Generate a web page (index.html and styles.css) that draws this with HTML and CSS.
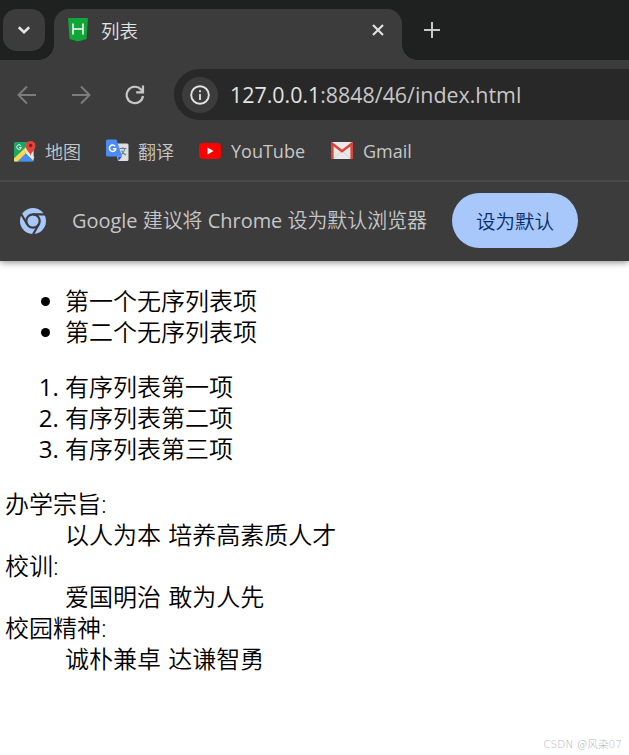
FILE: index.html
```
<!DOCTYPE html>
<html lang="zh-CN">
<head>
  <meta charset="UTF-8" />
  <title>列表</title>
  <link rel="stylesheet" href="styles.css">
</head>
<body>

  <!-- Browser window top -->
  <header class="browser">
    <div class="tab-strip">
      <button class="tab-search">
        <svg width="14" height="10" viewBox="0 0 14 10"><path d="M1.8 2.2 7 7.2l5.2-5" fill="none" stroke="#e3e3e3" stroke-width="2.6"/></svg>
      </button>
      <div class="tab">
        <svg class="favicon" width="20" height="24" viewBox="0 0 20 24"><path d="M0 0h20l-1.500 21L10 23.500 1.500 21z" fill="#12a53a"/><path d="M5 5.500v11M15 5.500v11M5 11h10" stroke="#fff" stroke-width="1.500" fill="none"/></svg>
        <span class="tab-title">列表</span>
        <svg width="12" height="12" viewBox="0 0 12 12"><path d="M1 1l10 10M11 1 1 11" stroke="#e3e3e3" stroke-width="2.100"/></svg>
      </div>
      <svg class="new-tab" width="16" height="16" viewBox="0 0 16 16"><path d="M8 0v16M0 8h16" stroke="#c7c7c7" stroke-width="2"/></svg>
    </div>

    <div class="toolbar">
      <svg width="20" height="20" viewBox="0 0 20 20"><path d="M19 10H2M10 1.500 1.500 10l8.500 8.500" fill="none" stroke="#7c7c7c" stroke-width="2"/></svg>
      <svg width="20" height="20" viewBox="0 0 20 20"><path d="M1 10h17M10 1.500l8.500 8.500-8.500 8.500" fill="none" stroke="#7c7c7c" stroke-width="2"/></svg>
      <svg width="20" height="20" viewBox="0 0 20 20"><path d="M18 11a8.200 8.200 0 1 1-2-6.500l2 2.300M18 .5v6.800h-6.800" fill="none" stroke="#c7c7c7" stroke-width="2.200"/></svg>
      <div class="address">
        <span class="site-info">
          <svg width="20" height="20" viewBox="0 0 20 20"><circle cx="10" cy="10" r="8.800" fill="none" stroke="#e3e3e3" stroke-width="1.900"/><path d="M10 9v6M10 5.200v2" stroke="#e3e3e3" stroke-width="1.800"/></svg>
        </span>
        <span class="url"><b>127.0.0.1</b>:8848/46/index.html</span>
      </div>
    </div>

    <nav class="bookmarks">
      <a class="bookmark maps">
        <svg width="22" height="22" viewBox="0 0 22 22">
          <rect x="0" y="2" width="19.500" height="19.500" rx="1.500" fill="#1fa463"/>
          <path d="M19.500 4v17L10 11.500z" fill="#e8e8e8"/>
          <path d="M10 12l9.500 9.500H1z" fill="#4c8bf5"/>
          <path d="M0 18.500 14 5l3 3L3.500 21.500H0z" fill="#ffd84d"/>
          <path d="M11 9l9 9" stroke="#e8e8e8" stroke-width="1.500"/>
          <path d="M16.500 16c-.5-4-4.800-5.500-4.800-10.200a4.900 4.900 0 0 1 9.800 0C21.500 10.500 17 12 16.500 16z" fill="#e2443b"/>
          <circle cx="16.600" cy="5.500" r="1.700" fill="#7e1d17"/>
          <path d="M6.800 5.600a2.300 2.300 0 1 0 .5 1.900H5" fill="none" stroke="#fff" stroke-width="1"/>
        </svg>
        地图
      </a>
      <a class="bookmark translate">
        <svg width="23" height="23" viewBox="0 0 23 23">
          <path d="M9 4.500h12a1.500 1.500 0 0 1 1.500 1.500v14.500A1.500 1.500 0 0 1 21 22h-9z" fill="#dedede"/>
          <path d="M12 17.500h4L12.500 22z" fill="#2751c5"/>
          <path d="M1.500.5h9L16 17.500H1.500A1.500 1.500 0 0 1 0 16V2A1.500 1.500 0 0 1 1.500.5z" fill="#4c8bf5"/>
          <path d="M9.200 7.300a3.200 3.200 0 1 0 .6 2.500H6.800" fill="none" stroke="#fff" stroke-width="1.500"/>
          <path d="M13.500 9.500h7M17 8v1.500M19 9.500c-.7 3-2 5-4 6.500M15.500 11.500c1 2 2.500 3.500 4.500 4.500" fill="none" stroke="#607d8b" stroke-width="1.100"/>
        </svg>
        翻译
      </a>
      <a class="bookmark youtube">
        <svg width="22" height="16" viewBox="0 0 22 16"><rect width="22" height="16" rx="4" fill="#f00"/><path d="M8.500 4.500v7l6-3.500z" fill="#fff"/></svg>
        YouTube
      </a>
      <a class="bookmark gmail">
        <svg width="22" height="17" viewBox="0 0 22 17"><rect width="22" height="17" rx="1.500" fill="#e9e9e9"/><path d="M3 16l8-7 8 7" fill="none" stroke="#d2d2d2"/><path d="M1.300 17V1.800L11 9.200l9.700-7.400V17" fill="none" stroke="#dc4439" stroke-width="2.600"/></svg>
        Gmail
      </a>
    </nav>

    <div class="infobar">
      <svg width="26" height="26" viewBox="0 0 26 26">
        <circle cx="13" cy="13" r="13" fill="#a8c7fa"/>
        <circle cx="13" cy="13" r="6.700" fill="none" stroke="#3c3c3c" stroke-width="2.200"/>
        <path d="M13 6.300h12M7.200 16.300 1.200 6M18.800 16.300 13 26.500" stroke="#3c3c3c" stroke-width="2.200"/>
      </svg>
      <span class="infobar-text"><span class="latin">Google</span> 建议将 <span class="latin">Chrome</span> 设为默认浏览器</span>
      <button class="default-btn">设为默认</button>
    </div>
  </header>

  <!-- Page content -->
  <main class="page">
    <ul>
      <li>第一个无序列表项</li>
      <li>第二个无序列表项</li>
    </ul>
    <ol>
      <li>有序列表第一项</li>
      <li>有序列表第二项</li>
      <li>有序列表第三项</li>
    </ol>
    <dl>
      <dt>办学宗旨:</dt>
      <dd>以人为本 培养高素质人才</dd>
      <dt>校训:</dt>
      <dd>爱国明治 敢为人先</dd>
      <dt>校园精神:</dt>
      <dd>诚朴兼卓 达谦智勇</dd>
    </dl>
  </main>

  <footer class="watermark">CSDN @风染07</footer>

</body>
</html>
```
FILE: styles.css
```
* {
  box-sizing: border-box;
}
body {
  margin: 0;
  height: 755px;
  display: flex;
  flex-direction: column;
  overflow: hidden;
  background: #fff;
  color: #000;
  font-family: "Open Sans", "Noto Sans CJK SC", sans-serif;
}
svg {
  display: block;
  flex: none;
}
.browser {
  height: 261px;
  flex: none;
  background: #3c3c3c;
  color: #c7c7c7;
  box-shadow: 0 1px 7px rgba(0, 0, 0, 0.5);
}

/* Tabs */
.tab-strip {
  display: flex;
  height: 60px;
  padding: 9px 0 0 3px;
  background: #1f2020;
}
.tab-search {
  display: flex;
  align-items: center;
  justify-content: center;
  width: 42px;
  height: 42px;
  padding: 0;
  border: 0;
  border-radius: 14px;
  background: #3c3c3c;
}
.tab {
  position: relative;
  display: flex;
  align-items: center;
  width: 348px;
  height: 51px;
  margin-left: 9px;
  padding: 0 18px 9px 14px;
  border-radius: 15px 15px 0 0;
  background: #3c3c3c;
}
/* Curved feet of the active tab */
.tab::before,
.tab::after {
  content: "";
  position: absolute;
  bottom: 0;
  width: 15px;
  height: 15px;
}
.tab::before {
  left: -15px;
  background: radial-gradient(circle at 0 0, transparent 14.5px, #3c3c3c 15px);
}
.tab::after {
  right: -15px;
  background: radial-gradient(circle at 100% 0, transparent 14.5px, #3c3c3c 15px);
}
.tab-title {
  flex: 1;
  margin-left: 13px;
  color: #e3e3e3;
  font-size: 18.500px;
  font-weight: 350;
}
.new-tab {
  margin: 13px 0 0 22px;
}

/* Address row */
.toolbar {
  display: flex;
  align-items: center;
  gap: 34px;
  height: 69px;
  padding-left: 17px;
}
.address {
  display: flex;
  align-items: center;
  flex: 1;
  height: 51px;
  margin-left: -5px;
  padding-left: 8px;
  border-radius: 26px 0 0 26px;
  background: #282828;
}
.site-info {
  display: flex;
  align-items: center;
  justify-content: center;
  width: 36px;
  height: 36px;
  border-radius: 50%;
  background: #3c3c3c;
}
.url {
  margin: -1px 0 0 12px;
  font-size: 21.400px;
  white-space: nowrap;
}
.url b {
  color: #e3e3e3;
  font-weight: 400;
}

/* Bookmarks */
.bookmarks {
  display: flex;
  height: 53px;
  padding: 0 0 8px 14px;
  border-bottom: 2px solid #494949;
}
.bookmark {
  display: flex;
  align-items: center;
  gap: 9px;
  font-size: 18px;
  font-weight: 350;
}
.translate {
  margin-left: 25px;
}
.youtube {
  margin-left: 25px;
}
.youtube,
.gmail {
  gap: 10px;
  font-weight: 400;
}
.gmail {
  margin-left: 26px;
}

/* Default browser prompt */
.infobar {
  display: flex;
  align-items: center;
  height: 79px;
  padding: 0 0 2px 20px;
}
.infobar-text {
  width: 356px;
  margin: -3px 0 0 26px;
  font-size: 19.950px;
  font-weight: 350;
  white-space: nowrap;
}
.latin {
  font-weight: 400;
}
.default-btn {
  width: 126px;
  height: 55px;
  margin-left: 24px;
  padding: 0 0 1px;
  border: 0;
  border-radius: 28px;
  background: #a8c7fa;
  color: #062e6f;
  font-family: inherit;
  font-size: 19.500px;
  font-weight: 350;
}

/* Lists */
.page {
  flex: 1;
  padding: 0 5px;
  font-size: 24px;
  font-weight: 350;
  line-height: 31px;
}
ul,
ol,
dl {
  margin: 24px 0;
}
ul,
ol {
  padding-left: 60px;
}
ol li::marker {
  font-weight: 400;
}
dd {
  margin-left: 60px;
  word-spacing: 1px;
}
.watermark {
  padding: 0 7px 2px 0;
  color: #b5b5b5;
  font-family: "DejaVu Sans", "Noto Sans CJK SC", sans-serif;
  font-size: 10.600px;
  font-weight: 300;
  line-height: 18px;
  text-align: right;
}
```
